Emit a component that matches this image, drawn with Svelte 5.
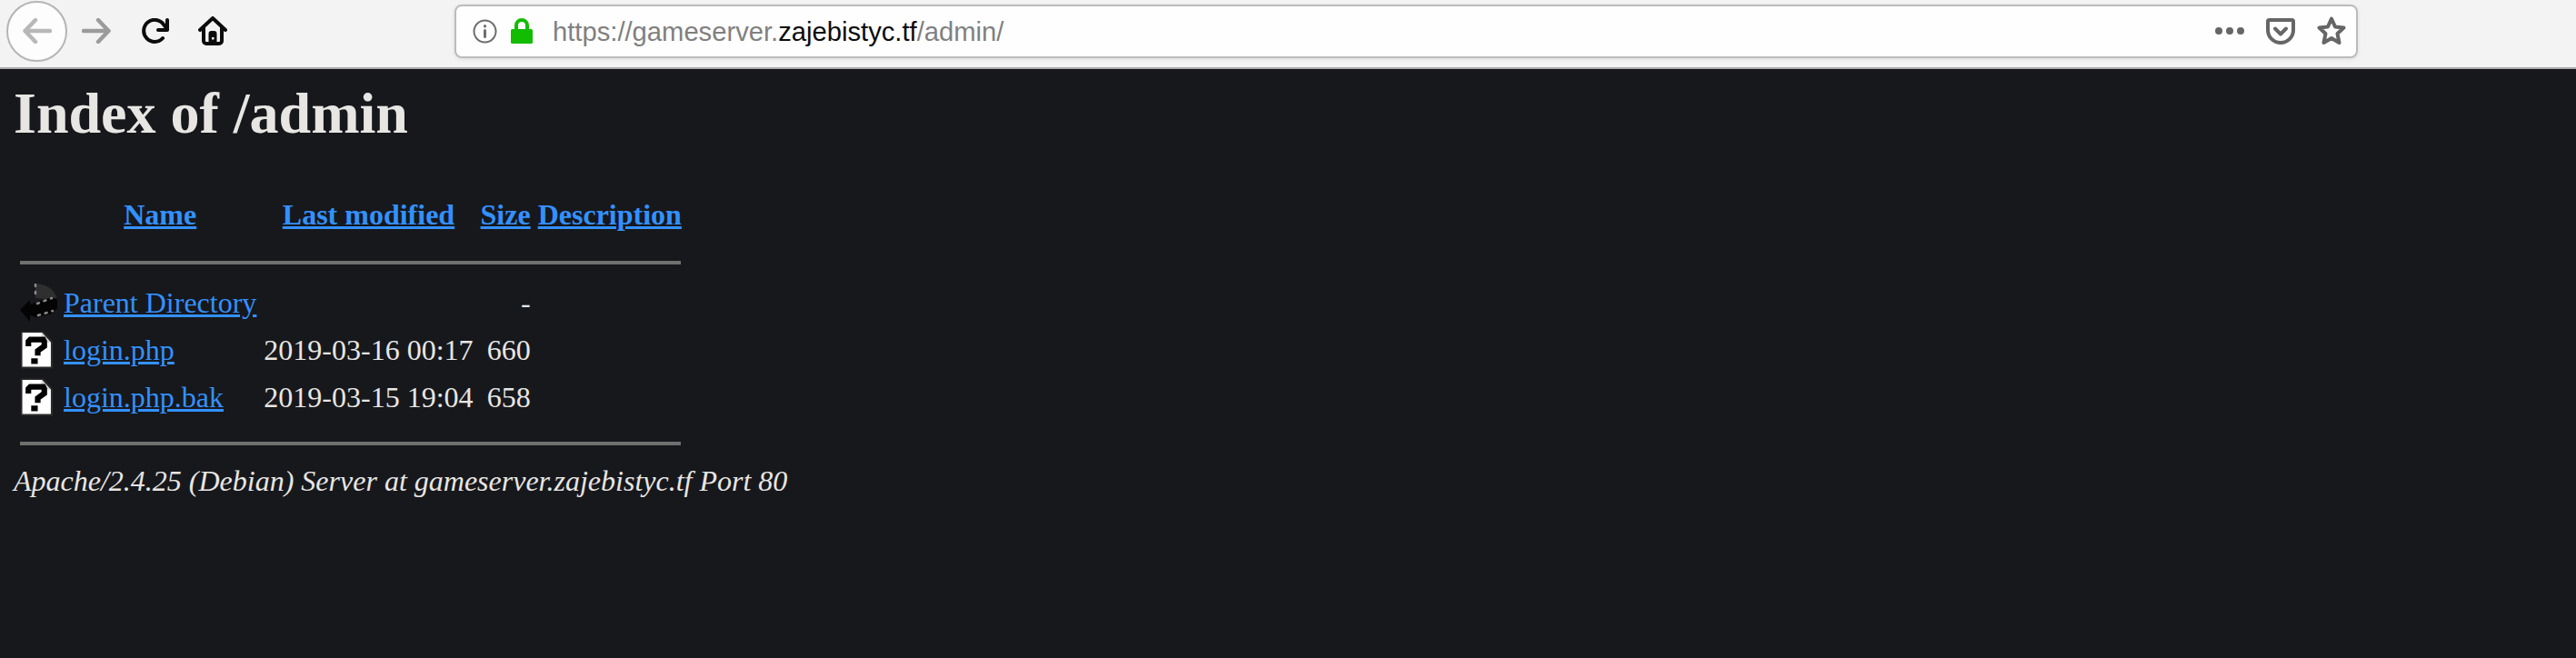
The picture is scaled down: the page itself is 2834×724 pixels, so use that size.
<script>
  const rows = [
    { icon: 'back', name: 'Parent Directory', date: '', size: '-' },
    { icon: 'unknown', name: 'login.php', date: '2019-03-16 00:17', size: '660' },
    { icon: 'unknown', name: 'login.php.bak', date: '2019-03-15 19:04', size: '658' }
  ];
</script>

<header class="toolbar">
  <div class="nav">
    <button class="round" aria-label="Back">
      <svg width="32" height="28" viewBox="0 0 32 28"><path d="M30 14H2.500M14 2 2.500 14 14 26" /></svg>
    </button>
    <svg class="fwd" width="32" height="28" viewBox="0 0 32 28"><path d="M2 14h27.500M18 2l11.500 12L18 26" /></svg>
    <svg class="reload" width="30" height="28" viewBox="0 0 30 28"><path d="M23 22A12 12 0 1 1 24 7l4 5" /><path d="M28 2v11H18" /></svg>
    <svg class="home" width="32" height="32" viewBox="0 0 32 32">
      <path d="M2 15 16 2l14 13M6 12v15a3 3 0 0 0 3 3h14a3 3 0 0 0 3-3V12" />
      <rect class="door" x="11.500" y="16" width="9" height="14" rx="3" />
      <rect class="knob" x="15" y="23" width="2.500" height="2.500" />
    </svg>
  </div>
  <div class="urlbar">
    <svg class="info" width="27" height="27" viewBox="0 0 27 27"><circle cx="13.500" cy="13.500" r="12" /><path d="M13.500 12.500v7M13.500 7.500v.5" /></svg>
    <svg class="lock" width="24" height="28" viewBox="0 0 24 28"><path d="M6 13V8a6 6 0 0 1 12 0v5" /><rect y="12" width="24" height="16" rx="1.500" /></svg>
    <span class="url">https://gameserver.<b>zajebistyc.tf</b>/admin/</span>
    <span class="actions">
      <svg width="32" height="8" viewBox="0 0 32 8"><circle cx="4" cy="4" r="4" /><circle cx="16" cy="4" r="4" /><circle cx="28" cy="4" r="4" /></svg>
      <svg class="line" width="32" height="29" viewBox="0 0 32 29"><path d="M3.500 2h25a1.500 1.500 0 0 1 1.500 1.500V13a14 14 0 0 1-28 0V3.500A1.500 1.500 0 0 1 3.500 2Z" /><path d="m10 11.500 6 6 6-6" /></svg>
      <svg class="line" width="32" height="32" viewBox="0 0 32 32"><path d="m16 2.500 4 9 9.500 1-7 6.500 2 10-8.500-5-8.500 5 2-10-7-6.500 9.500-1Z" /></svg>
    </span>
  </div>
</header>

<main>
  <h1>Index of /admin</h1>
  <table>
    <thead>
      <tr>
        <th class="ico"></th>
        <th><a href="#name">Name</a></th>
        <th><a href="#modified">Last modified</a></th>
        <th><a href="#size">Size</a></th>
        <th><a href="#description">Description</a></th>
      </tr>
      <tr><th class="rule" colspan="5"><hr class="first" /></th></tr>
    </thead>
    <tbody>
      {#each rows as row}
        <tr>
          <td class="ico">
            {#if row.icon === 'back'}
              <svg class="backicon" width="42" height="43" viewBox="0 0 42 43">
                <path class="wedge" d="M17 0Q32 1 38 10L41 18 17 16Z" />
                <path class="band" d="M0 29 11 18V23L17 21 35 15 41 17V27L35 33 18 37 11 35V42Z" />
                <path class="dots" d="M17 1V15M19 22 35 16M20 35 36 30" />
              </svg>
            {:else}
              <svg class="fileicon" width="35" height="42" viewBox="0 0 34 40">
                <path class="shadow" d="M0 0h24l10 11v29H0z" />
                <path class="page" d="M1.500 1.500h21l9.500 10.500v26H1.500z" />
                <path class="fold" d="M22 1.500 32 12H22z" />
                <path class="mark" d="M8 16v-5l2-2h14l1 2v5l-7 5v5" />
                <rect class="dot" x="11" y="29" width="7" height="6" />
              </svg>
            {/if}
          </td>
          <td><a href="#file">{row.name}</a></td>
          <td class="date">{row.date}</td>
          <td class="size">{row.size}</td>
          <td></td>
        </tr>
      {/each}
      <tr><th class="rule" colspan="5"><hr class="last" /></th></tr>
    </tbody>
  </table>
  <address>Apache/2.4.25 (Debian) Server at gameserver.zajebistyc.tf Port 80</address>
</main>

<style>
  :global(body) {
    margin: 0;
    background: #17181c;
    color: #e8e6e3;
    font-family: "Liberation Serif", serif;
    font-size: 32px;
  }

  .toolbar {
    height: 76px;
    box-sizing: border-box;
    padding-bottom: 6px;
    background: #f3f3f3;
    border-bottom: 2px solid #a9a9a9;
    display: flex;
    align-items: center;
  }

  .nav {
    display: flex;
    align-items: center;
    padding-left: 7px;
    width: 500px;
    box-sizing: border-box;
  }

  .round {
    width: 67px;
    height: 67px;
    padding: 0;
    border: 2px solid #b5b5b5;
    border-radius: 50%;
    background: #fdfdfd;
    display: flex;
    align-items: center;
    justify-content: center;
  }

  svg path {
    fill: none;
    stroke-linecap: round;
    stroke-linejoin: round;
  }

  .round path {
    stroke: #b8b8b8;
    stroke-width: 4.5;
  }

  .fwd {
    margin-left: 16px;
  }

  .fwd path {
    stroke: #9b9b9b;
    stroke-width: 4.5;
  }

  .reload {
    margin-left: 34px;
  }

  .reload path {
    stroke: #0c0c0d;
    stroke-width: 4;
  }

  .home {
    margin-left: 32px;
  }

  .home path {
    stroke: #0c0c0d;
    stroke-width: 4;
  }

  .door {
    fill: #0c0c0d;
  }

  .knob {
    fill: #f3f3f3;
  }

  .urlbar {
    width: 2094px;
    height: 59px;
    box-sizing: border-box;
    background: #fefefe;
    border: 2px solid #bcbcbc;
    border-radius: 8px;
    box-shadow: 0 1px 4px rgba(0, 0, 0, 0.1);
    display: flex;
    align-items: center;
    padding-left: 18px;
    font-family: "Liberation Sans", sans-serif;
    font-size: 29.2px;
    color: #808080;
  }

  .info circle,
  .info path {
    fill: none;
    stroke: #6d6d6d;
    stroke-width: 2;
  }

  .info path {
    stroke-width: 3;
  }

  .lock {
    margin-left: 15px;
  }

  .lock path {
    stroke: #12bc00;
    stroke-width: 4;
  }

  .lock rect {
    fill: #12bc00;
  }

  .url {
    margin-left: 22px;
    padding-top: 2px;
    flex: 1;
  }

  .url b {
    font-weight: 400;
    color: #0c0c0d;
  }

  .actions {
    display: flex;
    align-items: center;
    gap: 24px;
    padding-right: 11px;
  }

  .actions circle {
    fill: #666;
  }

  .line path {
    stroke: #666;
    stroke-width: 4;
  }

  main {
    padding: 0 15px;
  }

  h1 {
    font-size: 64px;
    margin: 12px 0 50px;
    line-height: 74px;
  }

  table {
    border-spacing: 4px;
    font-size: 32px;
    margin-left: -1px;
  }

  th {
    padding: 2px;
  }

  td {
    padding: 2px;
    height: 44px;
    white-space: nowrap;
  }

  a {
    color: #3391ff;
  }

  .date,
  .size {
    text-align: right;
  }

  .size {
    padding-left: 8px;
  }

  .ico {
    padding: 0;
    width: 46px;
  }

  .backicon {
    display: block;
    margin-left: 4px;
  }

  .fileicon {
    display: block;
    margin-left: 5px;
  }

  .shadow {
    fill: #2a2a2a;
  }

  .page {
    fill: #fff;
  }

  .fold {
    fill: #d6d6d6;
  }

  svg .mark {
    stroke: #000;
    stroke-width: 6;
    stroke-linecap: butt;
    stroke-linejoin: miter;
  }

  .dot {
    fill: #000;
  }

  .wedge {
    fill: #2f2f2f;
  }

  svg .band {
    fill: #040404;
  }

  svg .dots {
    stroke: #8a8a8a;
    stroke-width: 2.500;
    stroke-dasharray: 2 6;
  }

  .rule {
    padding: 0 3px 0 4px;
  }

  hr {
    height: 4px;
    border: none;
    background: #6f6f6f;
  }

  .first {
    margin: 26px 0 14px;
  }

  .last {
    margin: 21px 0 15px;
  }

  address {
    font-size: 32px;
    margin-top: 2px;
  }
</style>
